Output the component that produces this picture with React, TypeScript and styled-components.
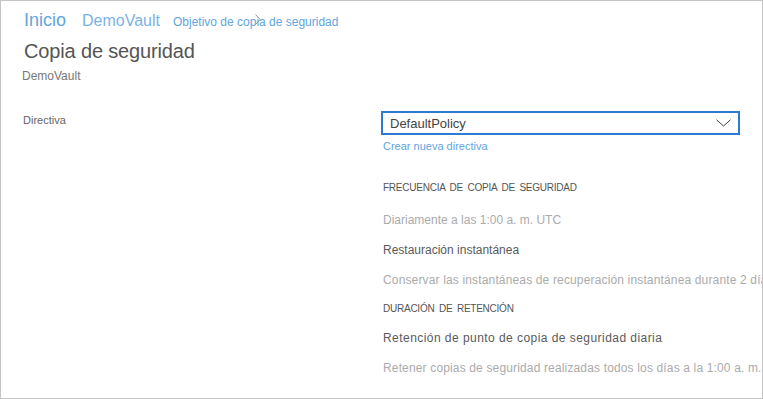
import styled, { createGlobalStyle } from "styled-components"

const GlobalStyle = createGlobalStyle`
  html, body {
    margin: 0;
    padding: 0;
    background: #fff;
  }
  body {
    font-family: "Liberation Sans", Arial, sans-serif;
  }
`

const Frame = styled.div`
  box-sizing: border-box;
  width: 763px;
  height: 399px;
  border: 1px solid #c4c4c4;
  overflow: hidden;
  background: #fff;
`

const Header = styled.header`
  padding: 9px 0 0 22px;
`

const Breadcrumb = styled.nav`
  display: flex;
  align-items: baseline;
  height: 20px;
`

const Crumb = styled.a<{ $size: number; $gap: number; $light?: boolean }>`
  position: relative;
  margin-left: ${(p) => p.$gap}px;
  font-size: ${(p) => p.$size}px;
  line-height: 20px;
  color: ${(p) => (p.$light ? "#7ab3e4" : "#62a5de")};
  text-decoration: none;
  white-space: nowrap;
`

const Cursor = styled.svg`
  position: absolute;
  left: 82px;
  top: 2px;
`

const Title = styled.h1`
  margin: 9px 0 0 1px;
  font-size: 20px;
  font-weight: normal;
  line-height: 24px;
  letter-spacing: -0.15px;
  color: #555;
`

const Subtitle = styled.div`
  margin-top: 5px;
  margin-left: -1px;
  font-size: 12px;
  line-height: 16px;
  color: #777;
`

const FormRow = styled.section`
  display: grid;
  grid-template-columns: 358px 1fr;
  margin-top: 27px;
  padding-left: 22px;
`

const Label = styled.label`
  padding-top: 2px;
  font-size: 11px;
  line-height: 14px;
  color: #666;
`

const Field = styled.div`
  display: flex;
  flex-direction: column;
  min-width: 0;
`

const Select = styled.div`
  box-sizing: border-box;
  display: flex;
  align-items: center;
  justify-content: space-between;
  width: 359px;
  height: 24px;
  padding: 0 7px 0 7px;
  border: 2px solid #2a7bd1;
  font-size: 13px;
  color: #444;
`

const Link = styled.a`
  margin: 4px 0 0 2px;
  font-size: 11px;
  line-height: 14px;
  color: #62a5de;
  text-decoration: none;
`

const SectionHead = styled.div<{ $top: number }>`
  margin: ${(p) => p.$top}px 0 0 2px;
  font-size: 10px;
  line-height: 14px;
  letter-spacing: -0.24px;
  word-spacing: 2px;
  color: #555;
  white-space: nowrap;
`

const Line = styled.div<{ $tone: "dark" | "light"; $top: number; $spread?: number }>`
  margin: ${(p) => p.$top}px 0 0 2px;
  font-size: 12px;
  line-height: 16px;
  letter-spacing: ${(p) => p.$spread ?? 0}px;
  color: ${(p) => (p.$tone === "dark" ? "#5a5a5a" : "#ababab")};
  white-space: nowrap;
`

function Chevron() {
  return (
    <svg width="15" height="8" viewBox="0 0 15 8">
      <path d="M0.5 0.8 L7.5 7 L14.5 0.8" fill="none" stroke="#444" strokeWidth="1" />
    </svg>
  )
}

export default function App() {
  return (
    <>
      <GlobalStyle />
      <Frame>
        <Header>
          <Breadcrumb>
            <Crumb $size={18} $gap={1}>Inicio</Crumb>
            <Crumb $size={16} $gap={16} $light>DemoVault</Crumb>
            <Crumb $size={12} $gap={13}>
              Objetivo de copia de seguridad
              <Cursor width="6" height="11" viewBox="0 0 6 11">
                <path d="M0.6 0.6 L5.2 5.5 L0.6 10.4" fill="none" stroke="#9a9a9a" strokeWidth="1" />
              </Cursor>
            </Crumb>
          </Breadcrumb>
          <Title>Copia de seguridad</Title>
          <Subtitle>DemoVault</Subtitle>
        </Header>
        <FormRow>
          <Label>Directiva</Label>
          <Field>
            <Select>
              <span>DefaultPolicy</span>
              <Chevron />
            </Select>
            <Link>Crear nueva directiva</Link>
            <SectionHead $top={28}>FRECUENCIA DE COPIA DE SEGURIDAD</SectionHead>
            <Line $tone="light" $top={17}>Diariamente a las 1:00 a. m. UTC</Line>
            <Line $tone="dark" $top={14}>Restauración instantánea</Line>
            <Line $tone="light" $top={14} $spread={0.15}>
              Conservar las instantáneas de recuperación instantánea durante 2 días
            </Line>
            <SectionHead $top={14}>DURACIÓN DE RETENCIÓN</SectionHead>
            <Line $tone="dark" $top={14} $spread={0.45}>
              Retención de punto de copia de seguridad diaria
            </Line>
            <Line $tone="light" $top={14} $spread={0.15}>
              Retener copias de seguridad realizadas todos los días a la 1:00 a. m.
            </Line>
          </Field>
        </FormRow>
      </Frame>
    </>
  )
}
